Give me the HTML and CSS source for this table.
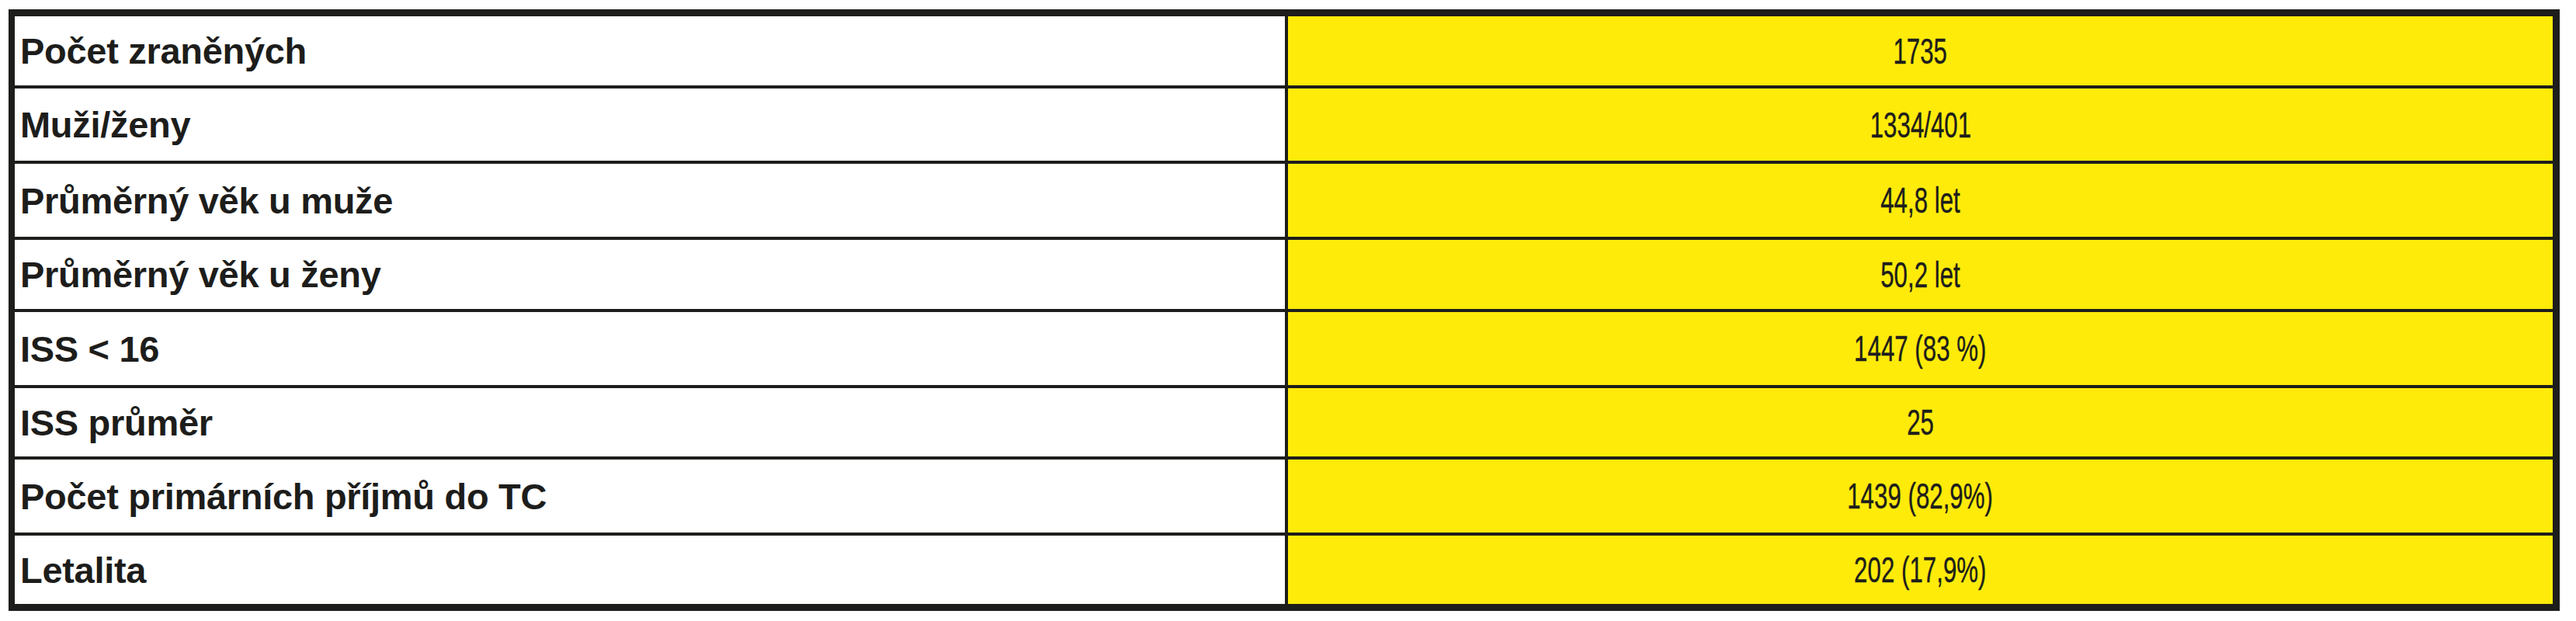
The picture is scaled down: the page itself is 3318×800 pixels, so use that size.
FILE: index.html
```html
<!DOCTYPE html>
<html lang="cs">
<head>
<meta charset="utf-8">
<title>Tabulka</title>
<link rel="stylesheet" href="styles.css">
</head>
<body>
<div class="table">
  <div class="row"><div class="label">Počet zraněných</div><div class="value"><span class="num">1735</span></div></div>
  <div class="row"><div class="label">Muži/ženy</div><div class="value"><span class="num">1334/401</span></div></div>
  <div class="row"><div class="label">Průměrný věk u muže</div><div class="value"><span class="num">44,8 let</span></div></div>
  <div class="row"><div class="label">Průměrný věk u ženy</div><div class="value"><span class="num">50,2 let</span></div></div>
  <div class="row"><div class="label">ISS &lt; 16</div><div class="value"><span class="num">1447 (83 %)</span></div></div>
  <div class="row"><div class="label">ISS průměr</div><div class="value"><span class="num">25</span></div></div>
  <div class="row"><div class="label">Počet primárních příjmů do TC</div><div class="value"><span class="num">1439 (82,9%)</span></div></div>
  <div class="row"><div class="label">Letalita</div><div class="value"><span class="num">202 (17,9%)</span></div></div>
</div>
</body>
</html>
```
FILE: styles.css
```css
html, body {
  margin: 0;
  padding: 0;
  background: #ffffff;
}
body {
  padding: 12px 0 0 11px;
}
.table {
  width: 3286px;
  box-sizing: border-box;
  border: 9px solid #1d1d1b;
  border-left-width: 8px;
  display: grid;
  grid-template-rows: 89px 93px 94px 89px 94px 88px 94px 88px;
  row-gap: 4px;
  background: #1d1d1b;
}
.row {
  display: grid;
  grid-template-columns: 1636px 1fr;
  column-gap: 4px;
}
.label {
  background: #ffffff;
  display: flex;
  align-items: center;
  padding-left: 7px;
  font-family: "Liberation Sans", Arial, sans-serif;
  font-weight: bold;
  font-size: 47px;
  letter-spacing: -0.3px;
  color: #1d1d1b;
}
.value {
  background: #ffeb0a;
  display: flex;
  align-items: center;
  justify-content: center;
  font-family: "Liberation Sans", Arial, sans-serif;
  font-size: 46px;
  color: #1d1d1b;
}
.num {
  display: inline-block;
  transform: scaleX(0.68);
  -webkit-text-stroke: 0.4px #1d1d1b;
}
```
